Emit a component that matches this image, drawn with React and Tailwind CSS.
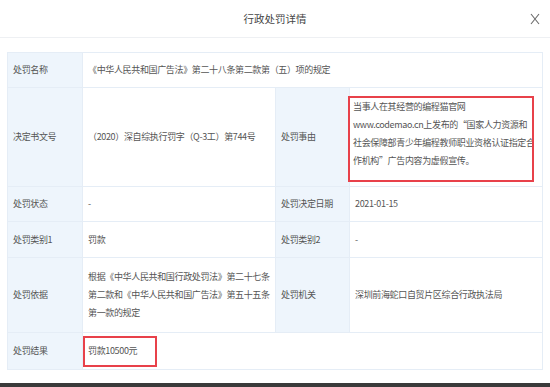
export default function App() {
  const label = "bg-[#eef5fc] flex items-center pl-[5px] text-[#555] whitespace-nowrap";
  const value = "bg-white flex items-center pl-[5px] text-[#555] whitespace-nowrap";
  return (
    <div
      className="w-[550px] h-[387px] bg-white flex flex-col text-[9px] leading-[18px] tracking-[-0.35px]"
      style={{ fontFamily: '"Noto Sans CJK SC", "Noto Sans", sans-serif' }}
    >
      {/* dialog header */}
      <div className="h-[38px] border-b border-[#eef0f3] flex items-center relative shrink-0">
        <div className="flex-1 text-center text-[10.5px] text-[#444] tracking-normal">行政处罚详情</div>
        <div className="absolute right-[10px] top-[13px]">
          <svg width="10" height="12" viewBox="0 0 10 12" fill="none" stroke="#6b6b6b" strokeWidth="1.1">
            <path d="M1 1 L9 11 M9 1 L1 11" />
          </svg>
        </div>
      </div>

      {/* details table */}
      <div className="px-[7px] mt-[14px]">
        <div className="grid grid-cols-[74px_192px_73px_192px] grid-rows-[34px_98px_34px_35px_74px_36px] gap-px bg-[#e5edf6] p-px w-[536px]">
          <div className={label}>处罚名称</div>
          <div className={`${value} col-span-3`}>《中华人民共和国广告法》第二十八条第二款第（五）项的规定</div>

          <div className={label}>决定书文号</div>
          <div className={value}>（2020）深自综执行罚字（Q-3工）第744号</div>
          <div className={label}>处罚事由</div>
          <div className="bg-white flex items-start pt-[8px] text-[#555] whitespace-nowrap">
            <div className="ml-[-2px] w-[186px] h-[86px] border-2 border-[#e8414a] pl-[3px] leading-[18px] overflow-hidden">
              当事人在其经营的编程猫官网
              <br />
              www.codemao.cn上发布的“国家人力资源和
              <br />
              社会保障部青少年编程教师职业资格认证指定合
              <br />
              作机构”广告内容为虚假宣传。
            </div>
          </div>

          <div className={label}>处罚状态</div>
          <div className={value}>-</div>
          <div className={label}>处罚决定日期</div>
          <div className={value}>2021-01-15</div>

          <div className={label}>处罚类别1</div>
          <div className={value}>罚款</div>
          <div className={label}>处罚类别2</div>
          <div className={value}>-</div>

          <div className={label}>处罚依据</div>
          <div className={value}>
            <div>
              根据《中华人民共和国行政处罚法》第二十七条
              <br />
              第二款和《中华人民共和国广告法》第五十五条
              <br />
              第一款的规定
            </div>
          </div>
          <div className={label}>处罚机关</div>
          <div className={value}>深圳前海蛇口自贸片区综合行政执法局</div>

          <div className={label}>处罚结果</div>
          <div className="bg-white col-span-3 flex items-center text-[#555] whitespace-nowrap">
            <div className="w-[74px] h-[31px] border-2 border-[#e8414a] flex items-center pl-[3px]">
              罚款10500元
            </div>
          </div>
        </div>
      </div>

      <div className="flex-1" />
      <div className="h-[4px] bg-[#3a3a3a] shrink-0" />
    </div>
  );
}
